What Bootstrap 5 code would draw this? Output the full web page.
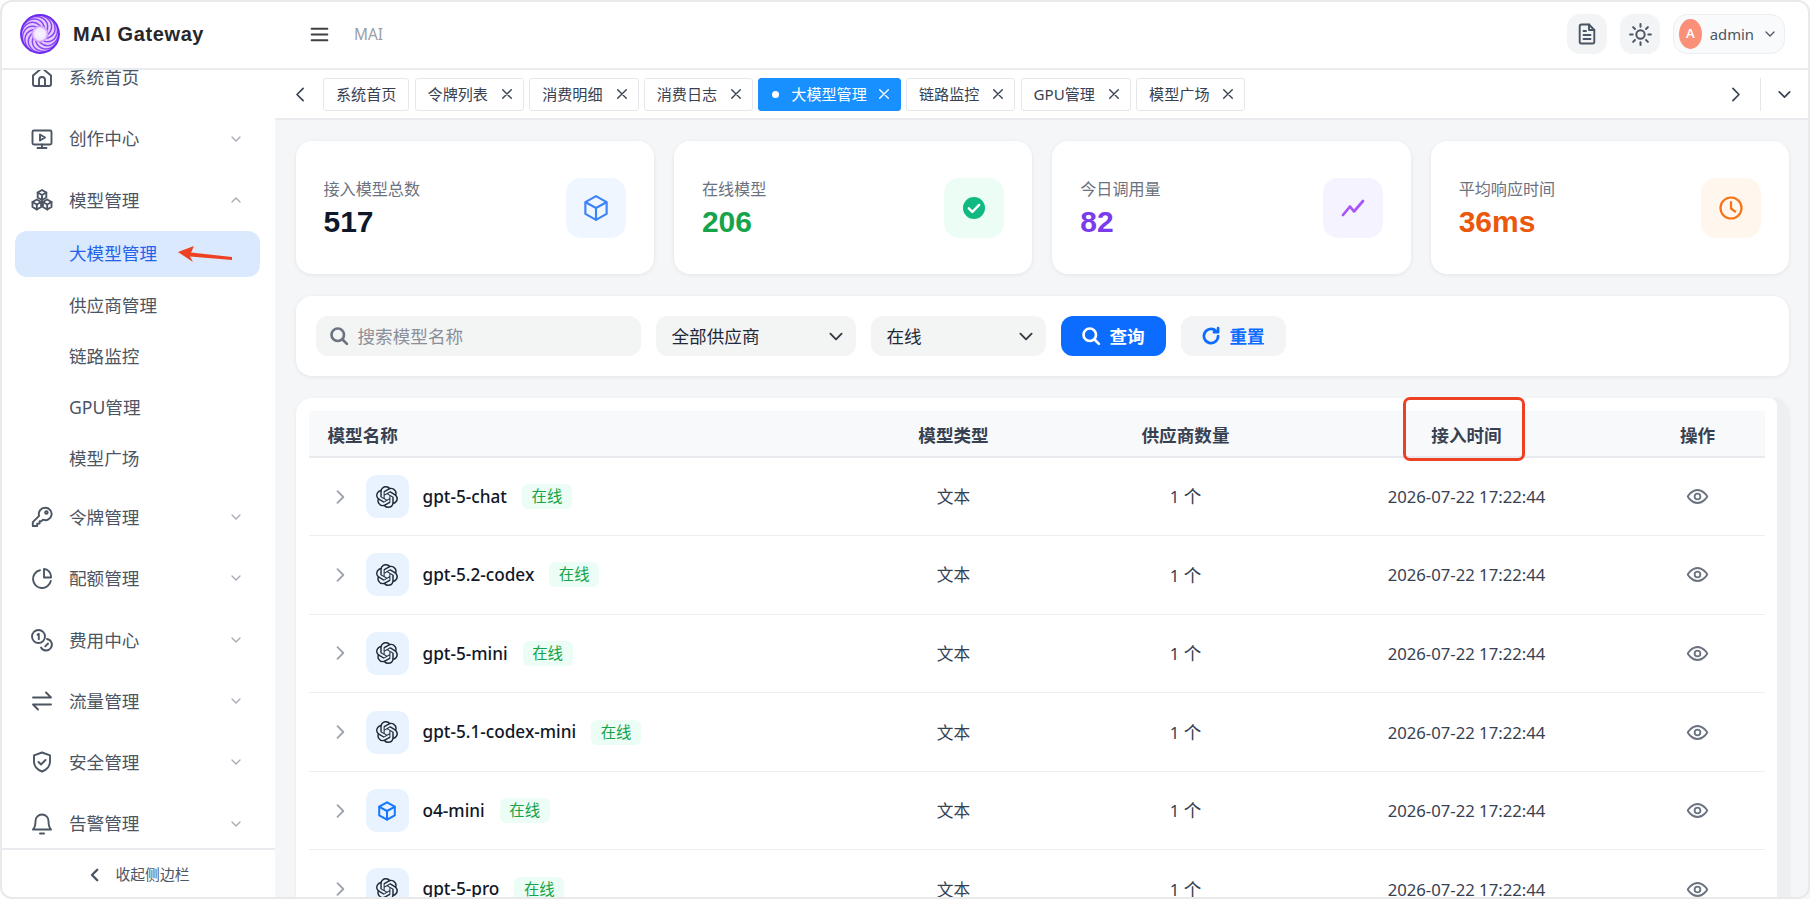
<!DOCTYPE html>
<html lang="en">
<head>
  <meta charset="UTF-8">
  <meta name="viewport" content="width=device-width, initial-scale=1.0">
  <title>MAI Gateway</title>
  <link href="https://cdn.jsdelivr.net/npm/bootstrap@5.3.0/dist/css/bootstrap.min.css" rel="stylesheet">
  <style>
    html, body { height: 100%; overflow: hidden; }
    body { font-family: "Noto Sans", "Noto Sans CJK SC", sans-serif; font-size: 15.4px; color: #1f2937; background: #fff; }
    .ic { fill: none; stroke: currentColor; stroke-width: 1.9; stroke-linecap: round; stroke-linejoin: round; flex-shrink: 0; }
    .ic.w-thin { stroke-width: 1.7; }
    .ic.w-mid { stroke-width: 2.2; }
    .ic.w-bold { stroke-width: 2.7; }
    .ic.w-heavy { stroke-width: 3.2; }

    /* app frame */
    .app-shell { position: relative; height: 100vh; overflow: hidden; }
    .app-shell::after { content: ""; position: absolute; inset: 0; border: 2px solid #e9e9ea; border-radius: 12px; pointer-events: none; z-index: 20; }

    /* header */
    .top-bar { height: 70px; border-bottom: 2px solid #e9ebee; padding: 0 25px 0 20px; background: #fff; position: relative; z-index: 5; }
    .brand { width: 255px; gap: 13px; }
    .brand-name { font-family: "Liberation Sans", sans-serif; font-weight: 700; font-size: 20px; letter-spacing: .6px; color: #27272a; }
    .crumb { color: #9a9ea6; font-size: 15.4px; margin-left: 24px; padding-top: 2px; }
    .menu-btn { color: #3f3f46; margin-left: 34px; }
    .top-tools { gap: 13px; }
    .round-btn { width: 40px; height: 40px; border-radius: 13px; background: #f3f4f6; color: #4b5563; }
    .user-pill { width: 112px; height: 40px; border-radius: 14px; background: #f9fafb; border: 1px solid #eceef1; padding: 0 6px 0 5px; gap: 8px; color: #4b5563; font-size: 14.8px; }
    .user-av { width: 30px; height: 30px; border-radius: 50%; background: #fb9079; color: #fff; font-size: 13px; font-weight: 600; }

    /* sidebar */
    .main-wrap { height: calc(100vh - 70px); }
    .side-bar { width: 275px; flex-shrink: 0; background: #fff; }
    .side-scroll { flex: 1 1 auto; min-height: 0; overflow: hidden; padding-left: 15px; }
    .side-list { width: 245px; margin-top: -23.3px; }
    .side-link { height: 61.3px; padding: 0 16px 0 15px; gap: 16px; color: #4b5563; font-size: 17.6px; }
    .side-link .side-label { flex: 1 1 auto; margin-left: -1px; }
    .side-chev { color: #a3a8b1; }
    .sub-link { height: 46px; margin-bottom: 5.2px; padding-left: 54px; color: #4b5563; font-size: 17.6px; border-radius: 12px; }
    .sub-link.on { background: #dbe9fe; color: #2563eb; }
    .side-foot { height: 51px; border-top: 2px solid #e9ebee; color: #4b5563; font-size: 14.8px; gap: 12px; flex-shrink: 0; }

    /* tabs */
    .right-pane { min-width: 0; background: #f5f6f8; }
    .tab-bar { height: 50px; flex-shrink: 0; background: #fff; border-bottom: 2px solid #e9ebee; padding: 0 2px 0 15px; color: #374151; }
    .tab-list { gap: 5.2px; margin-left: 12px; }
    .tab-item { height: 33px; padding: 0 11px 0 12px; gap: 14px; border: 1px solid #e5e7eb; border-radius: 3px; background: #fff; color: #374151; font-size: 15.1px; white-space: nowrap; }
    .tab-item:first-child { padding-right: 12px; }
    .tab-item.on { background: #1890ff; border-color: #1890ff; color: #fff; padding-left: 13px; gap: 12px; }
    .tab-dot { width: 7px; height: 7px; border-radius: 50%; background: #fff; }
    .tab-end { margin-left: auto; height: 33px; }
    .tab-split { width: 48px; height: 33px; border-left: 1px solid #e5e7eb; margin-left: 14px; padding-right: 1px; }

    /* content */
    .page-body { flex: 1 1 auto; min-height: 0; overflow: hidden; padding: 21px 21px 0 20.5px; }
    .stat-grid { display: grid; grid-template-columns: repeat(4, 1fr); gap: 20px; }
    .stat-box { height: 133px; padding: 0 28px; background: #fff; border-radius: 16px; box-shadow: 0 1px 4px rgba(17, 24, 39, .08); }
    .stat-label { color: #6b7280; font-size: 16.1px; line-height: 20px; margin-bottom: 4px; padding-top: 5px; }
    .stat-num { font-family: "Liberation Sans", sans-serif; font-weight: 700; font-size: 30px; line-height: 38px; }
    .stat-ico { width: 60px; height: 60px; border-radius: 15px; }
    .tone-blue { background: #eff6ff; color: #3b82f6; }
    .tone-green { background: #ecfdf5; color: #10b981; }
    .tone-violet { background: #f5f3ff; color: #a855f7; }
    .tone-orange { background: #fff7ed; color: #f97316; }
    .num-dark { color: #0f172a; }
    .num-green { color: #16a34a; }
    .num-violet { color: #7c3aed; }
    .num-orange { color: #ea580c; }

    .filter-box { height: 80px; margin-top: 22px; padding: 20px; gap: 15px; background: #fff; border-radius: 16px; box-shadow: 0 1px 4px rgba(17, 24, 39, .08); }
    .search-wrap { width: 325px; height: 40px; padding: 0 13px; gap: 9px; background: #f3f4f4; border-radius: 12px; color: #6b7280; }
    .search-wrap input { border: 0; outline: 0; background: transparent; padding: 0; width: 100%; font-size: 17.6px; color: #374151; }
    .search-wrap input::placeholder { color: #8a8f98; }
    .pick-a, .pick-b { height: 40px; border: 0; border-radius: 12px; background-color: #f3f4f4; background-size: 20px 15px; background-position: right 10px center; padding: 0 30px 0 16px; font-size: 17.6px; color: #1f2937; box-shadow: none; }
    .pick-a { width: 200px; }
    .pick-b { width: 175px; }
    .act-btn { height: 40px; width: 105px; gap: 8px; border-radius: 12px; border: 0; padding: 0; font-size: 17.6px; font-weight: 700; }
    .act-query { background: #0b6cff; color: #fff; }
    .act-reset { background: #f3f4f6; color: #0b6cff; }

    .list-box { margin-top: 22px; height: 600px; background: #eeeff1; border-radius: 16px; padding-right: 12px; box-shadow: 0 1px 4px rgba(17, 24, 39, .06); }
    .list-inner { height: 100%; background: #fff; border-radius: 16px 8px 0 0; padding: 13px 12px 0 13px; overflow: hidden; }
    .model-table { table-layout: fixed; width: 1456px; margin: 0; --bs-table-bg: transparent; }
    .model-table th { background: #f8f9fb; height: 46px; padding: 3px 0 0; font-size: 17.6px; font-weight: 700; color: #374151; border-bottom: 2px solid #e8eaed; vertical-align: middle; text-align: center; }
    .model-table td { height: 78.6px; padding: 0; font-size: 16.7px; color: #374151; border-bottom: 1px solid #edeef0; text-align: center; vertical-align: middle; }
    .model-table th.col-name { width: 530px; text-align: left; padding-left: 19px; }
    .model-table td.col-name { text-align: left; padding-left: 21px; }
    .col-type { width: 230px; }
    .col-vendor { width: 234px; }
    .col-time { width: 328px; }
    .col-op { width: 134px; }
    .cell-cn { font-size: 17.6px; }
    .row-chev { color: #9ca3af; margin-right: 16px; }
    .model-ico { width: 43px; height: 43px; border-radius: 11px; background: #e8f3ff; color: #1f2937; margin-right: 14px; flex-shrink: 0; }
    .model-ico.is-cube { color: #1677ff; }
    .model-name { font-weight: 500; font-size: 17.2px; color: #111827; }
    .state-tag { width: 50px; height: 25px; margin-left: 15px; border-radius: 6px; background: #ecfdf5; color: #16a34a; font-size: 15.4px; }
    .eye-btn { color: #6b7280; display: block; margin: 0 auto; }

    /* red marks drawn over the shot */
    .mark-rect { position: absolute; left: 1403px; top: 397px; width: 122px; height: 64px; border: 3px solid #ee4124; border-radius: 7px; z-index: 10; }
    .mark-arrow { position: absolute; left: 170px; top: 240px; z-index: 10; }
  </style>
</head>
<body>

<svg width="0" height="0" class="position-absolute">
  <defs>
    <symbol id="i-cube" viewBox="0 0 24 24"><path d="M12 2.5l8.500 4.800v9.400L12 21.500l-8.500-4.800V7.300z"/><path d="M3.700 7.400L12 12l8.300-4.600M12 12v9.300"/></symbol>
    <symbol id="i-chev-d" viewBox="0 0 24 24"><path d="M6 9l6 6 6-6"/></symbol>
    <symbol id="i-chev-u" viewBox="0 0 24 24"><path d="M6 15l6-6 6 6"/></symbol>
    <symbol id="i-chev-r" viewBox="0 0 24 24"><path d="M9 5l7 7-7 7"/></symbol>
    <symbol id="i-chev-l" viewBox="0 0 24 24"><path d="M15 5l-7 7 7 7"/></symbol>
    <symbol id="i-x" viewBox="5 5 14 14"><path d="M6 6l12 12M18 6L6 18"/></symbol>
    <symbol id="i-eye" viewBox="0 0 24 24"><path d="M1.800 12S5.600 5.200 12 5.200 22.200 12 22.200 12 18.400 18.800 12 18.800 1.800 12 1.800 12z"/><circle cx="12" cy="12" r="3"/></symbol>
    <symbol id="i-search" viewBox="0 0 24 24"><circle cx="10.500" cy="10.500" r="7.500"/><path d="M16.500 16.500L21.500 21.500"/></symbol>
    <symbol id="i-openai" viewBox="0 0 24 24"><path fill="currentColor" stroke="none" d="M22.2819 9.8211a5.9847 5.9847 0 0 0-.5157-4.9108 6.0462 6.0462 0 0 0-6.5098-2.9A6.0651 6.0651 0 0 0 4.9807 4.1818a5.9847 5.9847 0 0 0-3.9977 2.9 6.0462 6.0462 0 0 0 .7427 7.0966 5.98 5.98 0 0 0 .511 4.9107 6.051 6.051 0 0 0 6.5146 2.9001A5.9847 5.9847 0 0 0 13.2599 24a6.0557 6.0557 0 0 0 5.7718-4.2058 5.9894 5.9894 0 0 0 3.9977-2.9001 6.0557 6.0557 0 0 0-.7475-7.0729zm-9.022 12.6081a4.4755 4.4755 0 0 1-2.8764-1.0408l.1419-.0804 4.7783-2.7582a.7948.7948 0 0 0 .3927-.6813v-6.7369l2.02 1.1686a.071.071 0 0 1 .038.052v5.5826a4.504 4.504 0 0 1-4.4945 4.4944zm-9.6607-4.1254a4.4708 4.4708 0 0 1-.5346-3.0137l.142.0852 4.783 2.7582a.7712.7712 0 0 0 .7806 0l5.8428-3.3685v2.3324a.0804.0804 0 0 1-.0332.0615L9.74 19.9502a4.4992 4.4992 0 0 1-6.1408-1.6464zM2.3408 7.8956a4.485 4.485 0 0 1 2.3655-1.9728V11.6a.7664.7664 0 0 0 .3879.6765l5.8144 3.3543-2.0201 1.1685a.0757.0757 0 0 1-.071 0l-4.8303-2.7865A4.504 4.504 0 0 1 2.3408 7.872zm16.5963 3.8558L13.1038 8.364 15.1192 7.2a.0757.0757 0 0 1 .071 0l4.8303 2.7913a4.4944 4.4944 0 0 1-.6765 8.1042v-5.6772a.79.79 0 0 0-.407-.667zm2.0107-3.0231l-.142-.0852-4.7735-2.7818a.7759.7759 0 0 0-.7854 0L9.409 9.2297V6.8974a.0662.0662 0 0 1 .0284-.0615l4.8303-2.7866a4.4992 4.4992 0 0 1 6.6802 4.66zM8.3065 12.863l-2.02-1.1638a.0804.0804 0 0 1-.038-.0567V6.0742a4.4992 4.4992 0 0 1 7.3757-3.4537l-.142.0805L8.704 5.459a.7948.7948 0 0 0-.3927.6813zm1.0976-2.3654l2.602-1.4998 2.6069 1.4998v2.9994l-2.5974 1.4997-2.6067-1.4997Z"/></symbol>
    <radialGradient id="logo-core"><stop offset="0" stop-color="#faf5ff"/><stop offset=".65" stop-color="#f3e8ff"/><stop offset="1" stop-color="#c084fc"/></radialGradient>
    <path id="logo-blade" d="M20 1C30 3 35.500 12 28.500 20" fill="none" stroke="#8b46f3" stroke-width="1.500" stroke-linecap="round"/>
  </defs>
</svg>

<div class="app-shell">

  <!-- header -->
  <header class="top-bar d-flex align-items-center">
    <div class="brand d-flex align-items-center">
      <svg width="40" height="40" viewBox="0 0 40 40">
        <circle cx="20" cy="20" r="19" fill="#e4cdfd"/>
        <g>
          <use href="#logo-blade"/>
          <use href="#logo-blade" transform="rotate(30 20 20)"/>
          <use href="#logo-blade" transform="rotate(60 20 20)"/>
          <use href="#logo-blade" transform="rotate(90 20 20)"/>
          <use href="#logo-blade" transform="rotate(120 20 20)"/>
          <use href="#logo-blade" transform="rotate(150 20 20)"/>
          <use href="#logo-blade" transform="rotate(180 20 20)"/>
          <use href="#logo-blade" transform="rotate(210 20 20)"/>
          <use href="#logo-blade" transform="rotate(240 20 20)"/>
          <use href="#logo-blade" transform="rotate(270 20 20)"/>
          <use href="#logo-blade" transform="rotate(300 20 20)"/>
          <use href="#logo-blade" transform="rotate(330 20 20)"/>
        </g>
        <circle cx="20" cy="20" r="19" fill="none" stroke="#6a2cf0" stroke-width="1.800"/>
        <circle cx="20" cy="20" r="8.500" fill="url(#logo-core)"/>
      </svg>
      <span class="brand-name">MAI Gateway</span>
    </div>
    <svg class="ic menu-btn" width="21" height="21" viewBox="0 0 24 24"><path d="M3 5.500h18M3 12h18M3 18.500h18" stroke-width="2.200"/></svg>
    <span class="crumb">MAI</span>
    <div class="top-tools ms-auto d-flex align-items-center">
      <div class="round-btn d-flex align-items-center justify-content-center">
        <svg class="ic" width="24" height="24" viewBox="0 0 24 24"><path d="M14 2.500H6.500a1.800 1.800 0 0 0-1.800 1.800v15.400a1.800 1.800 0 0 0 1.800 1.800h11a1.800 1.800 0 0 0 1.800-1.800V8z"/><path d="M14 2.500V8h5.300M8.500 9h2.500M8.500 13h7M8.500 17h7"/></svg>
      </div>
      <div class="round-btn d-flex align-items-center justify-content-center">
        <svg class="ic" width="25" height="25" viewBox="0 0 24 24"><circle cx="12" cy="12" r="4"/><path d="M12 2v2.500M12 19.500V22M2 12h2.500M19.500 12H22M4.900 4.900l1.800 1.800M17.300 17.300l1.800 1.800M4.900 19.100l1.800-1.800M17.300 6.700l1.800-1.800"/></svg>
      </div>
      <div class="user-pill d-flex align-items-center">
        <span class="user-av d-flex align-items-center justify-content-center">A</span>
        <span>admin</span>
        <svg class="ic ms-auto" width="16" height="16"><use href="#i-chev-d"/></svg>
      </div>
    </div>
  </header>

  <div class="main-wrap d-flex">

    <!-- sidebar -->
    <aside class="side-bar d-flex flex-column">
      <div class="side-scroll">
        <nav class="side-list d-flex flex-column">
          <a class="side-link d-flex align-items-center text-decoration-none" href="#">
            <svg class="ic" width="24" height="24" viewBox="0 0 24 24"><path d="M3 10.500L12 3l9 7.500V19a2 2 0 0 1-2 2H5a2 2 0 0 1-2-2z"/><path d="M9 21v-6a3 3 0 0 1 6 0v6"/></svg>
            <span class="side-label">系统首页</span>
          </a>
          <a class="side-link d-flex align-items-center text-decoration-none" href="#">
            <svg class="ic" width="24" height="24" viewBox="0 0 24 24"><rect x="2.500" y="3.500" width="19" height="14" rx="1.500"/><path d="M12 17.500V21M7.500 21h9"/><path d="M10 7.500l5 3-5 3z"/></svg>
            <span class="side-label">创作中心</span>
            <svg class="ic side-chev" width="16" height="16"><use href="#i-chev-d"/></svg>
          </a>
          <a class="side-link d-flex align-items-center text-decoration-none" href="#">
            <svg class="ic" width="24" height="24" viewBox="0 0 24 24"><path d="M12 2l4.300 2.500v5L12 12l-4.300-2.500v-5zM6.800 11.500l4.300 2.500v5l-4.300 2.500L2.500 19v-5zM17.200 11.500l4.300 2.500v5l-4.300 2.500-4.300-2.500v-5z"/><path d="M7.700 4.500L12 7l4.300-2.500M12 7v5M2.500 14l4.300 2.500 4.300-2.500M6.800 16.500v5M12.900 14l4.300 2.500 4.300-2.500M17.200 16.500v5"/></svg>
            <span class="side-label">模型管理</span>
            <svg class="ic side-chev" width="16" height="16"><use href="#i-chev-u"/></svg>
          </a>
          <a class="sub-link on d-flex align-items-center text-decoration-none" href="#">大模型管理</a>
          <a class="sub-link d-flex align-items-center text-decoration-none" href="#">供应商管理</a>
          <a class="sub-link d-flex align-items-center text-decoration-none" href="#">链路监控</a>
          <a class="sub-link d-flex align-items-center text-decoration-none" href="#">GPU管理</a>
          <a class="sub-link d-flex align-items-center text-decoration-none" href="#">模型广场</a>
          <a class="side-link d-flex align-items-center text-decoration-none" href="#">
            <svg class="ic" width="24" height="24" viewBox="0 0 24 24"><path d="M15 2.800a6.200 6.200 0 0 0-5.900 8.100L2.800 17.200V21h4.400v-2.400h2.400v-2.400h1.900l1.500-1.500A6.200 6.200 0 1 0 15 2.800z"/><circle cx="16.400" cy="7.600" r="1.300"/></svg>
            <span class="side-label">令牌管理</span>
            <svg class="ic side-chev" width="16" height="16"><use href="#i-chev-d"/></svg>
          </a>
          <a class="side-link d-flex align-items-center text-decoration-none" href="#">
            <svg class="ic" width="24" height="24" viewBox="0 0 24 24"><path d="M10 4.200A9 9 0 1 0 20.800 15"/><path d="M14 3a7.500 7.500 0 0 1 7 7.500v1h-7z"/></svg>
            <span class="side-label">配额管理</span>
            <svg class="ic side-chev" width="16" height="16"><use href="#i-chev-d"/></svg>
          </a>
          <a class="side-link d-flex align-items-center text-decoration-none" href="#">
            <svg class="ic" width="24" height="24" viewBox="0 0 24 24"><circle cx="8.500" cy="8.500" r="6.500"/><path d="M7.500 6.800l1.300-1v5.500"/><path d="M17 11a5.800 5.800 0 1 1-6 8.500"/><path d="M18 15.500l-2.800 2.800"/></svg>
            <span class="side-label">费用中心</span>
            <svg class="ic side-chev" width="16" height="16"><use href="#i-chev-d"/></svg>
          </a>
          <a class="side-link d-flex align-items-center text-decoration-none" href="#">
            <svg class="ic" width="24" height="24" viewBox="0 0 24 24"><path d="M3 8.500h18M16 3.500l5 5M21 15.500H3M8 20.500l-5-5"/></svg>
            <span class="side-label">流量管理</span>
            <svg class="ic side-chev" width="16" height="16"><use href="#i-chev-d"/></svg>
          </a>
          <a class="side-link d-flex align-items-center text-decoration-none" href="#">
            <svg class="ic" width="24" height="24" viewBox="0 0 24 24"><path d="M12 2.500l8 2.800v6.200c0 5-3.400 8.300-8 10-4.600-1.700-8-5-8-10V5.300z"/><path d="M8.500 12l2.500 2.500 4.500-4.500"/></svg>
            <span class="side-label">安全管理</span>
            <svg class="ic side-chev" width="16" height="16"><use href="#i-chev-d"/></svg>
          </a>
          <a class="side-link d-flex align-items-center text-decoration-none" href="#">
            <svg class="ic" width="24" height="24" viewBox="0 0 24 24"><path d="M12 2.500A6.500 6.500 0 0 0 5.500 9c0 6-2.500 8.500-2.500 8.500h18S18.500 15 18.500 9A6.500 6.500 0 0 0 12 2.500z"/><path d="M10 21.500h4"/></svg>
            <span class="side-label">告警管理</span>
            <svg class="ic side-chev" width="16" height="16"><use href="#i-chev-d"/></svg>
          </a>
        </nav>
      </div>
      <div class="side-foot d-flex align-items-center justify-content-center">
        <svg class="ic w-heavy" width="18" height="18"><use href="#i-chev-l"/></svg>
        <span>收起侧边栏</span>
      </div>
    </aside>

    <div class="right-pane flex-grow-1 d-flex flex-column">

      <!-- tabs -->
      <div class="tab-bar d-flex align-items-center">
        <svg class="ic" width="21" height="21"><use href="#i-chev-l"/></svg>
        <div class="tab-list d-flex align-items-center" id="tabs"></div>
        <div class="tab-end d-flex align-items-center">
          <svg class="ic" width="21" height="21"><use href="#i-chev-r"/></svg>
          <div class="tab-split d-flex align-items-center justify-content-center">
            <svg class="ic" width="21" height="21"><use href="#i-chev-d"/></svg>
          </div>
        </div>
      </div>

      <main class="page-body">
        <div class="stat-grid">
          <div class="stat-box d-flex align-items-center justify-content-between">
            <div><div class="stat-label">接入模型总数</div><div class="stat-num num-dark">517</div></div>
            <div class="stat-ico tone-blue d-flex align-items-center justify-content-center"><svg class="ic w-thin" width="30" height="30"><use href="#i-cube"/></svg></div>
          </div>
          <div class="stat-box d-flex align-items-center justify-content-between">
            <div><div class="stat-label">在线模型</div><div class="stat-num num-green">206</div></div>
            <div class="stat-ico tone-green d-flex align-items-center justify-content-center">
              <svg width="24" height="24" viewBox="0 0 24 24"><circle cx="12" cy="12" r="11" fill="currentColor"/><path d="M6.800 12.300l3.600 3.600 6.800-7" fill="none" stroke="#fff" stroke-width="2.400" stroke-linecap="round" stroke-linejoin="round"/></svg>
            </div>
          </div>
          <div class="stat-box d-flex align-items-center justify-content-between">
            <div><div class="stat-label">今日调用量</div><div class="stat-num num-violet">82</div></div>
            <div class="stat-ico tone-violet d-flex align-items-center justify-content-center"><svg class="ic w-bold" width="24" height="24" viewBox="0 0 24 24"><path d="M2 19l7-8.500 4 5L22 5"/></svg></div>
          </div>
          <div class="stat-box d-flex align-items-center justify-content-between">
            <div><div class="stat-label">平均响应时间</div><div class="stat-num num-orange">36ms</div></div>
            <div class="stat-ico tone-orange d-flex align-items-center justify-content-center"><svg class="ic w-mid" width="24" height="24" viewBox="0 0 24 24"><circle cx="12" cy="12" r="10.500"/><path d="M12 6v6.500l4 3"/></svg></div>
          </div>
        </div>

        <div class="filter-box d-flex align-items-center">
          <div class="search-wrap d-flex align-items-center">
            <svg class="ic w-heavy" width="20" height="20"><use href="#i-search"/></svg>
            <input type="text" placeholder="搜索模型名称">
          </div>
          <select class="form-select pick-a"><option>全部供应商</option></select>
          <select class="form-select pick-b"><option>在线</option></select>
          <button class="act-btn act-query d-flex align-items-center justify-content-center" type="button">
            <svg class="ic w-heavy" width="20" height="20"><use href="#i-search"/></svg>查询
          </button>
          <button class="act-btn act-reset d-flex align-items-center justify-content-center" type="button">
            <svg class="ic w-heavy" width="20" height="20" viewBox="0 0 24 24"><path d="M20.500 12a8.500 8.500 0 1 1-2.500-6"/><path d="M20.500 2.500V7.500h-5"/></svg>重置
          </button>
        </div>

        <div class="list-box">
          <div class="list-inner">
            <table class="table model-table">
              <thead>
                <tr>
                  <th class="col-name">模型名称</th>
                  <th class="col-type">模型类型</th>
                  <th class="col-vendor">供应商数量</th>
                  <th class="col-time">接入时间</th>
                  <th class="col-op">操作</th>
                </tr>
              </thead>
              <tbody id="rows"></tbody>
            </table>
          </div>
        </div>
      </main>
    </div>
  </div>

  <div class="mark-rect"></div>
  <svg class="mark-arrow" width="70" height="30" viewBox="170 240 70 30"><polygon points="178,252 194,246 191,252.500 232,257 232,260 190,256.500 193,262" fill="#ee4124"/></svg>
</div>

<script src="https://cdn.jsdelivr.net/npm/bootstrap@5.3.0/dist/js/bootstrap.bundle.min.js"></script>
<script>
  const tabs = ['系统首页', '令牌列表', '消费明细', '消费日志', '大模型管理', '链路监控', 'GPU管理', '模型广场'];
  document.getElementById('tabs').innerHTML = tabs.map((name, i) => {
    const on = name === '大模型管理';
    return `<div class="tab-item d-flex align-items-center${on ? ' on' : ''}">
      ${on ? '<span class="tab-dot"></span>' : ''}<span>${name}</span>
      ${i ? '<svg class="ic" width="10" height="10"><use href="#i-x"/></svg>' : ''}
    </div>`;
  }).join('');

  const models = [
    ['gpt-5-chat', 'openai'], ['gpt-5.2-codex', 'openai'], ['gpt-5-mini', 'openai'],
    ['gpt-5.1-codex-mini', 'openai'], ['o4-mini', 'cube'], ['gpt-5-pro', 'openai']
  ];
  document.getElementById('rows').innerHTML = models.map(([name, icon]) => `<tr>
    <td class="col-name"><div class="d-flex align-items-center">
      <svg class="ic row-chev w-mid" width="20" height="20"><use href="#i-chev-r"/></svg>
      <span class="model-ico d-flex align-items-center justify-content-center${icon === 'cube' ? ' is-cube' : ''}"><svg class="ic w-mid" width="22" height="22"><use href="#i-${icon}"/></svg></span>
      <span class="model-name">${name}</span>
      <span class="state-tag d-flex align-items-center justify-content-center">在线</span>
    </div></td>
    <td class="cell-cn">文本</td>
    <td>1 <span class="cell-cn">个</span></td>
    <td>2026-07-22 17:22:44</td>
    <td><svg class="ic eye-btn" width="23" height="23"><use href="#i-eye"/></svg></td>
  </tr>`).join('');
</script>
</body>
</html>
